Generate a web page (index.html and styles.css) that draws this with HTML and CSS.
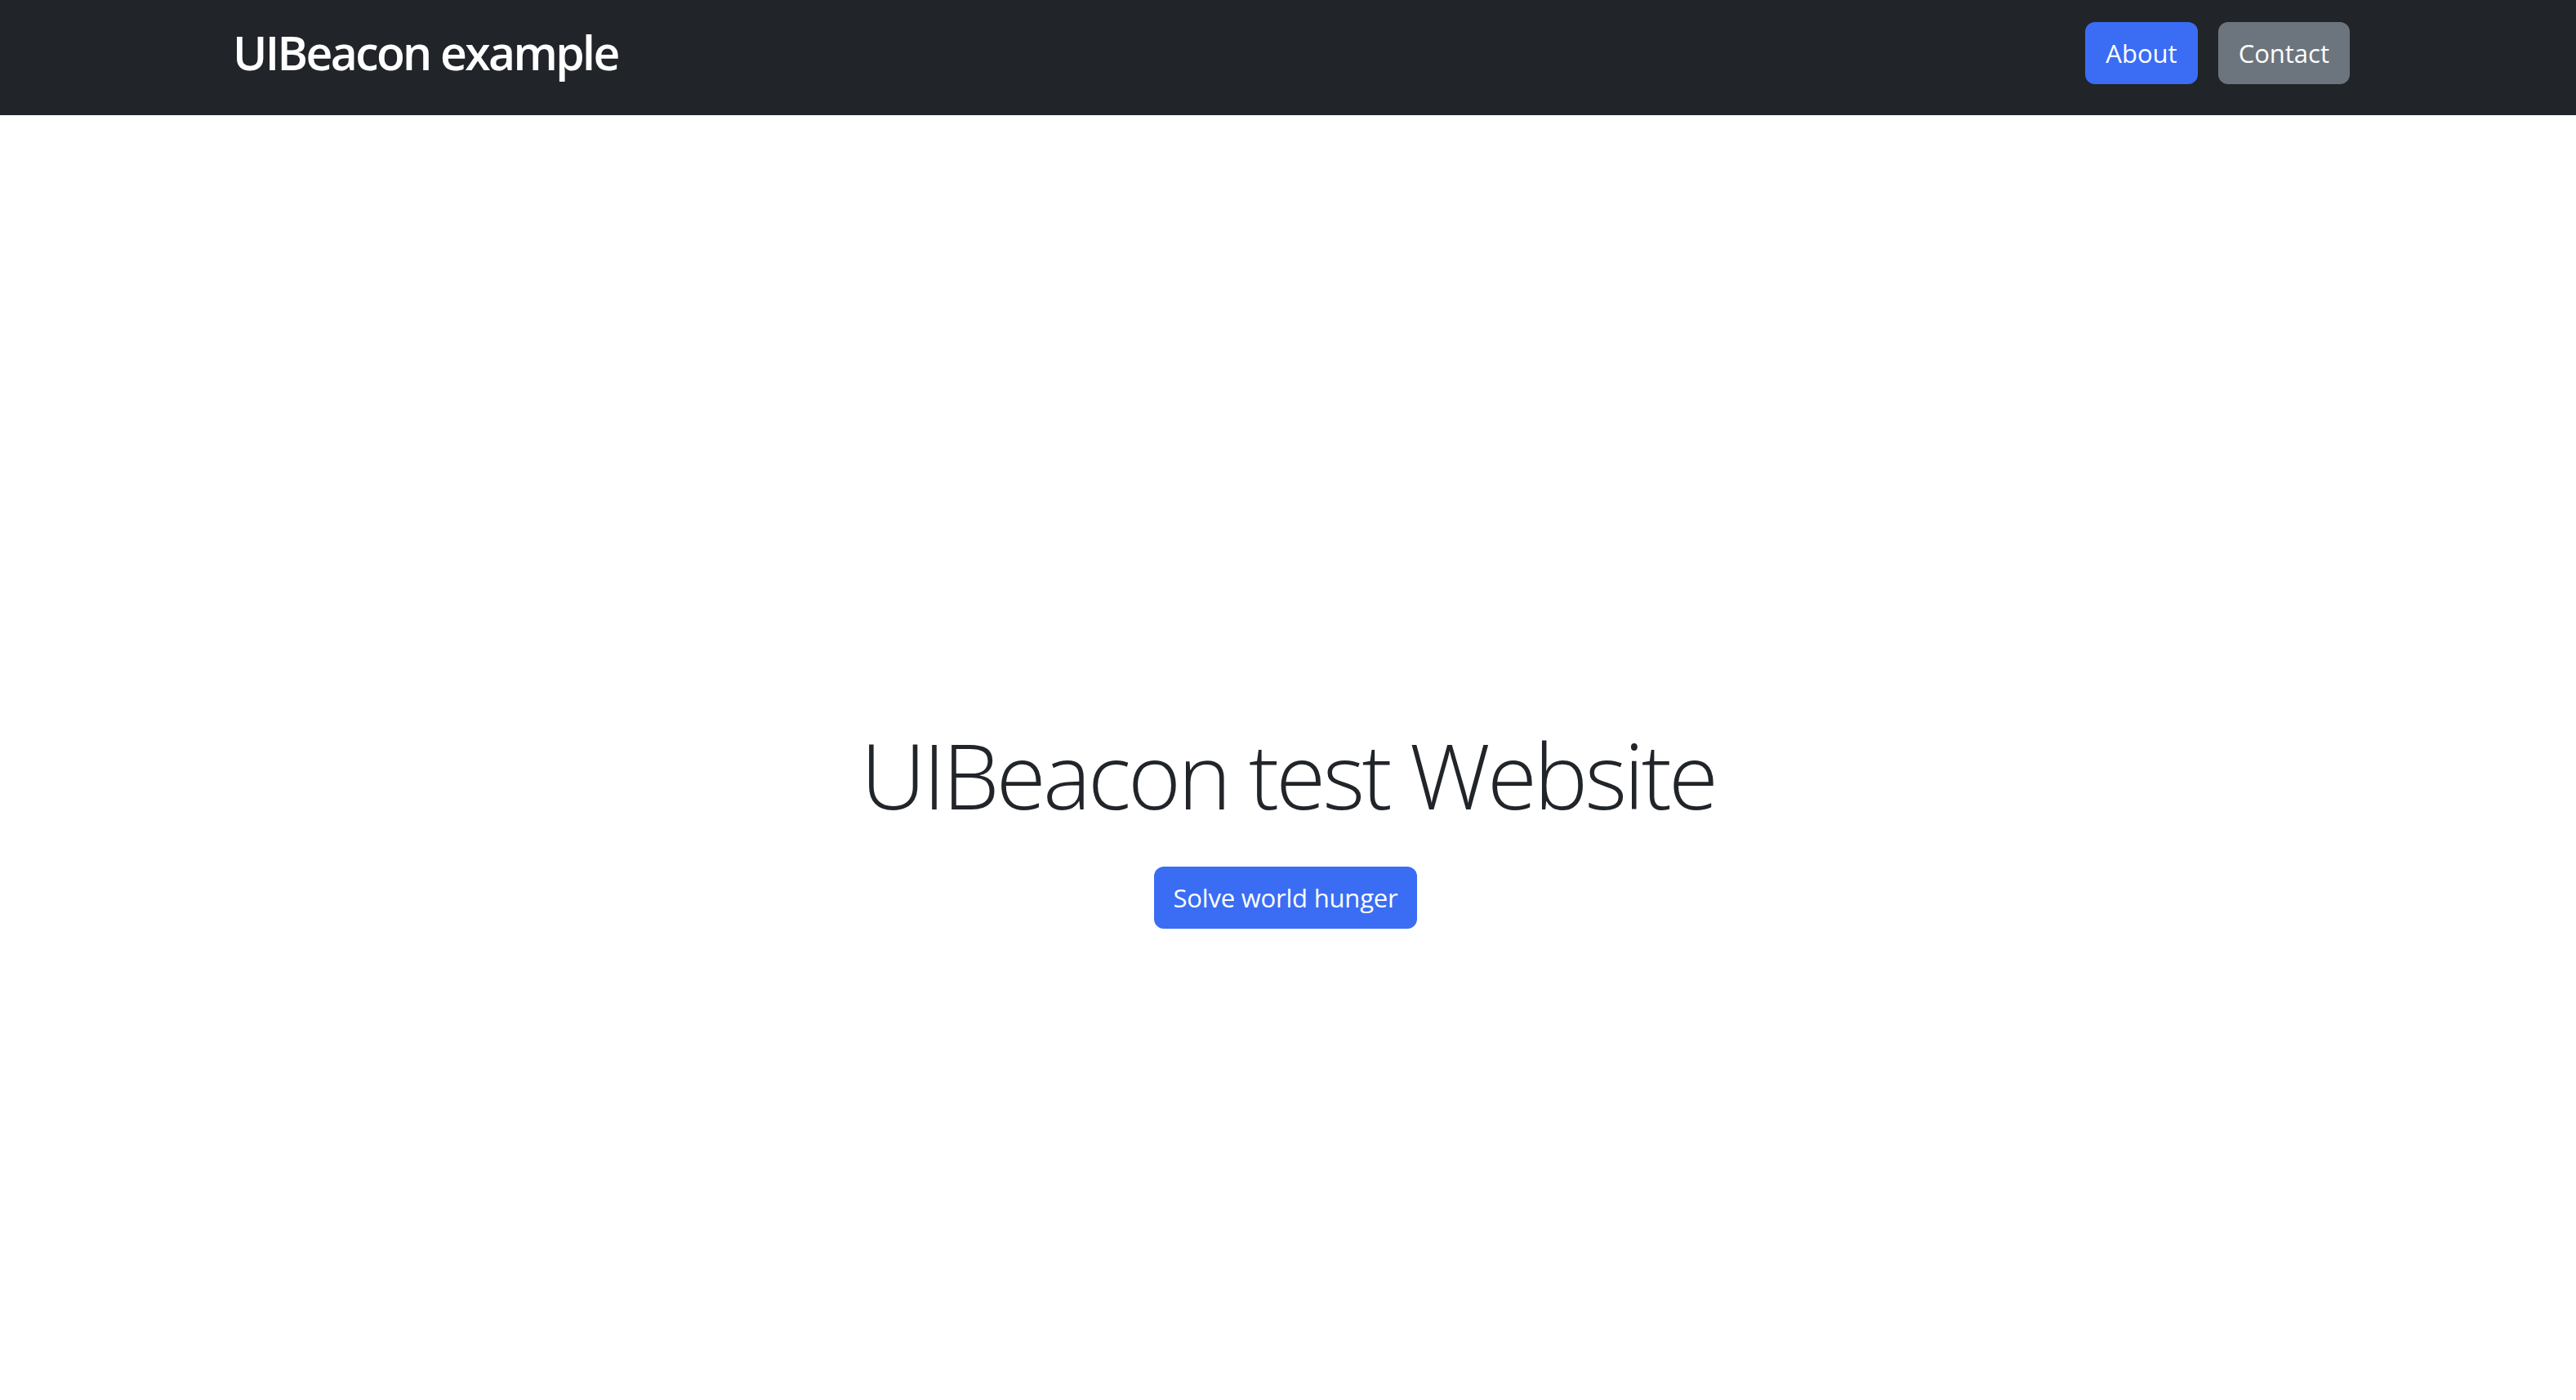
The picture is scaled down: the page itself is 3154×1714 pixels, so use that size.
FILE: index.html
```html
<!DOCTYPE html>
<html lang="en">
<head>
<meta charset="utf-8">
<title>UIBeacon example</title>
<link rel="stylesheet" href="styles.css">
</head>
<body>
<header class="navbar">
  <div class="container">
    <a class="brand" href="#">UIBeacon example</a>
    <nav class="nav">
      <a class="btn btn-primary" href="#">About</a>
      <a class="btn btn-secondary" href="#">Contact</a>
    </nav>
  </div>
</header>
<main class="hero">
  <h1 class="display">UIBeacon test Website</h1>
  <a class="btn btn-primary btn-hero" href="#">Solve world hunger</a>
</main>
</body>
</html>
```

FILE: styles.css
```css
* { box-sizing: border-box; }
html, body { margin: 0; padding: 0; }
body {
  font-family: "Open Sans", "Noto Sans", sans-serif;
  color: #212529;
  background: #fff;
}
a { text-decoration: none; }

.navbar {
  background: #212529;
  height: 141px;
}
.container {
  max-width: 2640px;
  margin: 0 auto;
  padding: 0 24px;
  height: 100%;
  display: flex;
  align-items: center;
  justify-content: space-between;
}
.brand {
  color: #fff;
  font-size: 57px;
  font-weight: 600;
  letter-spacing: -2.6px;
  margin-top: -14px;
  margin-left: 4px;
}
.nav {
  display: flex;
  gap: 25px;
  margin-right: -4px;
  margin-top: -12px;
}
.btn {
  display: inline-flex;
  align-items: center;
  justify-content: center;
  height: 76px;
  padding: 0 25px;
  border-radius: 12px;
  font-size: 31px;
  color: #fff;
  letter-spacing: 0;
}
.btn-hero {
  padding: 0 24px;
  letter-spacing: -0.2px;
  margin-right: 6px;
}
.btn-primary { background: #3a6df4; }
.btn-secondary { background: #6c757d; }

.hero {
  display: flex;
  flex-direction: column;
  align-items: center;
  padding-top: 741px;
}
.display {
  margin: 0 0 46px;
  font-size: 111px;
  font-weight: 300;
  line-height: 1.2;
  letter-spacing: -3.8px;
  color: #212529;
}
```
